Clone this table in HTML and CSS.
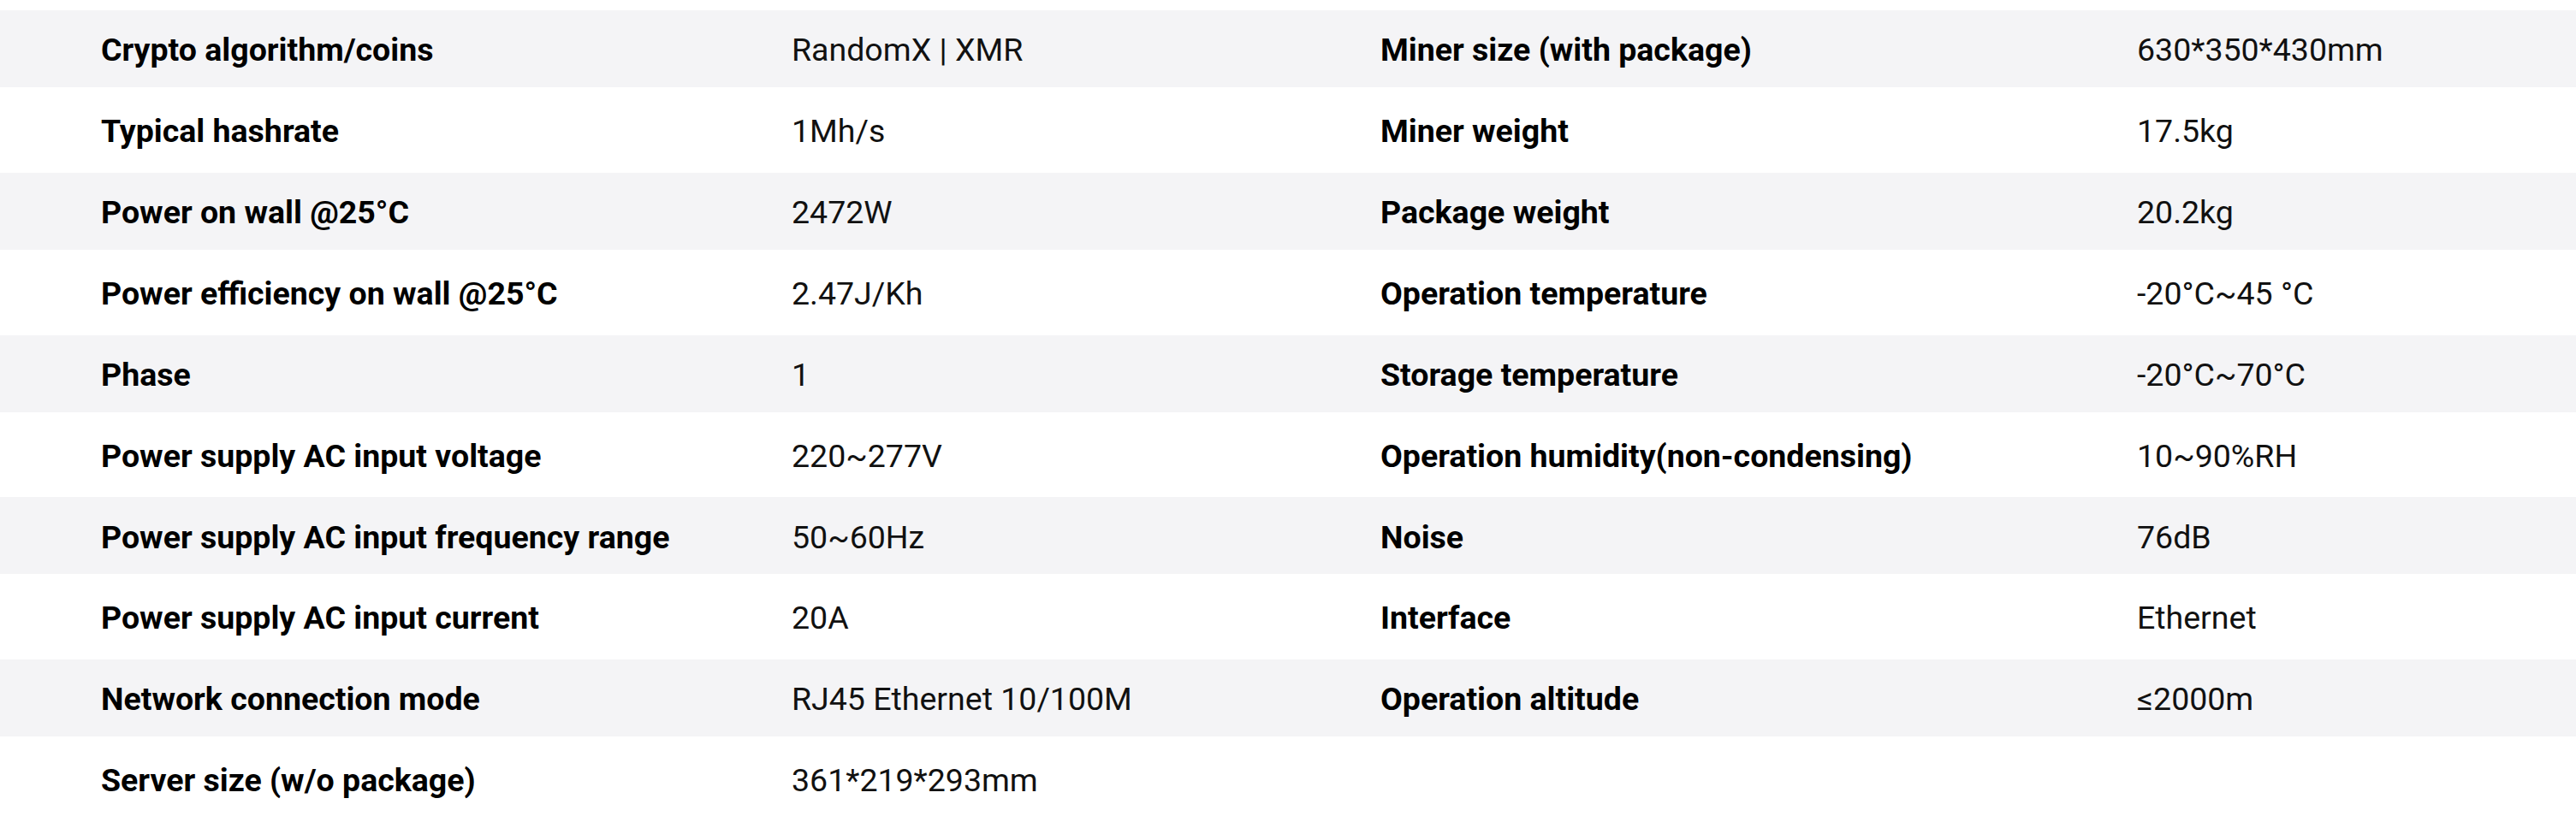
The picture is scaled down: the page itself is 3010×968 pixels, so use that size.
FILE: index.html
```html
<!DOCTYPE html>
<html lang="en">
<head>
<meta charset="utf-8">
<title>Specifications</title>
<link rel="stylesheet" href="styles.css">
</head>
<body>
<div class="specs">
  <div class="row alt"><div class="label">Crypto algorithm/coins</div><div class="value">RandomX | XMR</div><div class="label">Miner size (with package)</div><div class="value">630*350*430mm</div></div>
  <div class="row"><div class="label">Typical hashrate</div><div class="value">1Mh/s</div><div class="label">Miner weight</div><div class="value">17.5kg</div></div>
  <div class="row alt"><div class="label">Power on wall @25°C</div><div class="value">2472W</div><div class="label">Package weight</div><div class="value">20.2kg</div></div>
  <div class="row"><div class="label">Power efficiency on wall @25°C</div><div class="value">2.47J/Kh</div><div class="label">Operation temperature</div><div class="value">-20°C~45 °C</div></div>
  <div class="row alt"><div class="label">Phase</div><div class="value">1</div><div class="label">Storage temperature</div><div class="value">-20°C~70°C</div></div>
  <div class="row"><div class="label">Power supply AC input voltage</div><div class="value">220~277V</div><div class="label">Operation humidity(non-condensing)</div><div class="value">10~90%RH</div></div>
  <div class="row alt"><div class="label">Power supply AC input frequency range</div><div class="value">50~60Hz</div><div class="label">Noise</div><div class="value">76dB</div></div>
  <div class="row"><div class="label">Power supply AC input current</div><div class="value">20A</div><div class="label">Interface</div><div class="value">Ethernet</div></div>
  <div class="row alt"><div class="label">Network connection mode</div><div class="value">RJ45 Ethernet 10/100M</div><div class="label">Operation altitude</div><div class="value">≤2000m</div></div>
  <div class="row"><div class="label">Server size (w/o package)</div><div class="value">361*219*293mm</div><div class="label"></div><div class="value"></div></div>
</div>
</body>
</html>
```

FILE: styles.css
```css
html, body {
  margin: 0;
  padding: 0;
  background: #ffffff;
}

body {
  font-family: Roboto, "Liberation Sans", sans-serif;
  color: #000;
}

.specs {
  padding-top: 12px;
  display: flex;
  flex-direction: column;
}

.row {
  box-sizing: border-box;
  display: grid;
  grid-template-columns: 807px 688px 884px 1fr;
  align-items: center;
  height: 99.75px;
  padding-left: 118px;
  padding-top: 4px;
  font-size: 37.5px;
  line-height: 1;
  white-space: nowrap;
}

.row.alt {
  height: 90px;
  background: #f4f4f6;
}

.label {
  font-weight: 700;
  color: #000;
}

.value {
  font-weight: 400;
  color: #111;
}
```
